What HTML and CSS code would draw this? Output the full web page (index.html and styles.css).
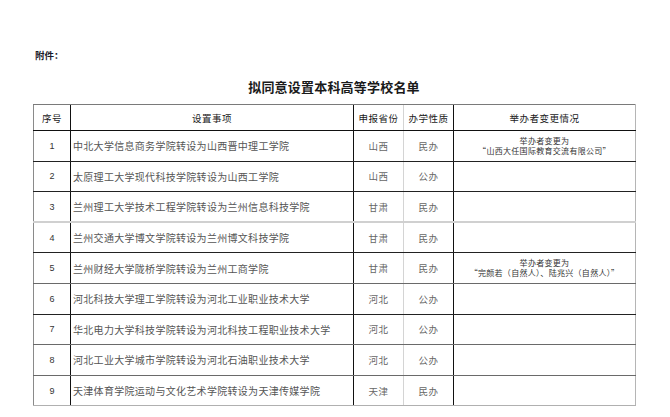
FILE: index.html
```html
<!DOCTYPE html>
<html lang="zh">
<head>
<meta charset="utf-8">
<link rel="stylesheet" href="styles.css">
</head>
<body>
<div class="page">
  <div class="attach">附件：</div>
  <h1 class="title">拟同意设置本科高等学校名单</h1>
  <table class="list">
    <colgroup>
      <col class="c1"><col class="c2"><col class="c3"><col class="c4"><col class="c5">
    </colgroup>
    <thead>
      <tr class="head">
        <th class="bl">序号</th>
        <th class="bk">设置事项</th>
        <th class="bk">申报省份</th>
        <th class="lg">办学性质</th>
        <th class="bk br">举办者变更情况</th>
      </tr>
    </thead>
    <tbody>
      <tr class="dark">
        <td class="num bl">1</td><td class="item bk">中北大学信息商务学院转设为山西晋中理工学院</td><td class="prov bk">山西</td><td class="nat lg">民办</td><td class="note bk br">举办者变更为<br>“山西大任国际教育交流有限公司”</td>
      </tr>
      <tr class="dark">
        <td class="num bl">2</td><td class="item bk">太原理工大学现代科技学院转设为山西工学院</td><td class="prov bk">山西</td><td class="nat lg">公办</td><td class="note bk br"></td>
      </tr>
      <tr class="light">
        <td class="num bl">3</td><td class="item bk">兰州理工大学技术工程学院转设为兰州信息科技学院</td><td class="prov bk">甘肃</td><td class="nat lg">民办</td><td class="note bk br"></td>
      </tr>
      <tr class="dark">
        <td class="num bl">4</td><td class="item bk">兰州交通大学博文学院转设为兰州博文科技学院</td><td class="prov bk">甘肃</td><td class="nat lg">民办</td><td class="note bk br"></td>
      </tr>
      <tr class="mid">
        <td class="num bl">5</td><td class="item bk">兰州财经大学陇桥学院转设为兰州工商学院</td><td class="prov bk">甘肃</td><td class="nat lg">民办</td><td class="note bk br">举办者变更为<br>“完颜若（自然人）、陆兆兴（自然人）”</td>
      </tr>
      <tr class="dark">
        <td class="num bl">6</td><td class="item bk">河北科技大学理工学院转设为河北工业职业技术大学</td><td class="prov bk">河北</td><td class="nat lg">公办</td><td class="note bk br"></td>
      </tr>
      <tr class="mid">
        <td class="num bl">7</td><td class="item bk">华北电力大学科技学院转设为河北科技工程职业技术大学</td><td class="prov bk">河北</td><td class="nat lg">公办</td><td class="note bk br"></td>
      </tr>
      <tr class="mid">
        <td class="num bl">8</td><td class="item bk">河北工业大学城市学院转设为河北石油职业技术大学</td><td class="prov bk">河北</td><td class="nat lg">公办</td><td class="note bk br"></td>
      </tr>
      <tr class="last">
        <td class="num bl">9</td><td class="item bk">天津体育学院运动与文化艺术学院转设为天津传媒学院</td><td class="prov bk">天津</td><td class="nat lg">民办</td><td class="note bk br"></td>
      </tr>
    </tbody>
  </table>
</div>
</body>
</html>
```

FILE: styles.css
```css
html, body {
  margin: 0;
  padding: 0;
  background: #ffffff;
}

.page {
  padding: 49px 0 0 33px;
  width: 602px;
  font-family: "Noto Sans CJK SC", "Noto Sans", sans-serif;
}

.attach {
  font-size: 9.5px;
  font-weight: bold;
  color: #1a1a2a;
  height: 13px;
  line-height: 13px;
  padding-left: 2px;
}

.title {
  margin: 16px 0 0 0;
  font-size: 13px;
  font-weight: bold;
  color: #1a1a1a;
  text-align: center;
  height: 26px;
  line-height: 18px;
  letter-spacing: 0.2px;
}

.list {
  border-collapse: collapse;
  table-layout: fixed;
  width: 602px;
}

.c1 { width: 37px; }
.c2 { width: 283px; }
.c3 { width: 50px; }
.c4 { width: 50px; }
.c5 { width: 182px; }

.list th, .list td {
  padding: 0;
  border-top: 1px solid #888888;
  border-bottom: 1px solid #888888;
}

.head th {
  height: 25px;
  font-size: 9.5px;
  font-weight: normal;
  color: #1a1a1a;
  text-align: center;
  border-top: 1px solid #7a7a7a;
  border-bottom: 1px solid #111111;
  letter-spacing: 0.5px;
}

.list tbody tr {
  height: 30.6px;
}

.bl { border-left: 1px solid #8a8a8a; }
.bk { border-left: 1px solid #111111; }
.lg { border-left: 1.5px solid #d4d4d4; }
.br { border-right: 1px solid #b5b5b5; }

tr.dark td { border-bottom: 1px solid #222222; }
tr.light td { border-bottom: 2px solid #d0d0d0; }
tr.mid td { border-bottom: 1px solid #6a6a6a; }
tr.last td { border-bottom: 1px solid #b0b0b0; }

.num {
  text-align: center;
  font-size: 9px;
  color: #333333;
  font-family: "Liberation Sans", "Noto Sans", sans-serif;
}

.item {
  font-size: 10px;
  letter-spacing: 0.3px;
  color: #555555;
  padding-left: 2px !important;
  white-space: nowrap;
}

.prov, .nat {
  text-align: center;
  font-size: 9.5px;
  color: #666666;
  letter-spacing: 0.5px;
}

.note {
  text-align: center;
  font-size: 8px;
  line-height: 10px;
  color: #333333;
  letter-spacing: 0.3px;
}
```
